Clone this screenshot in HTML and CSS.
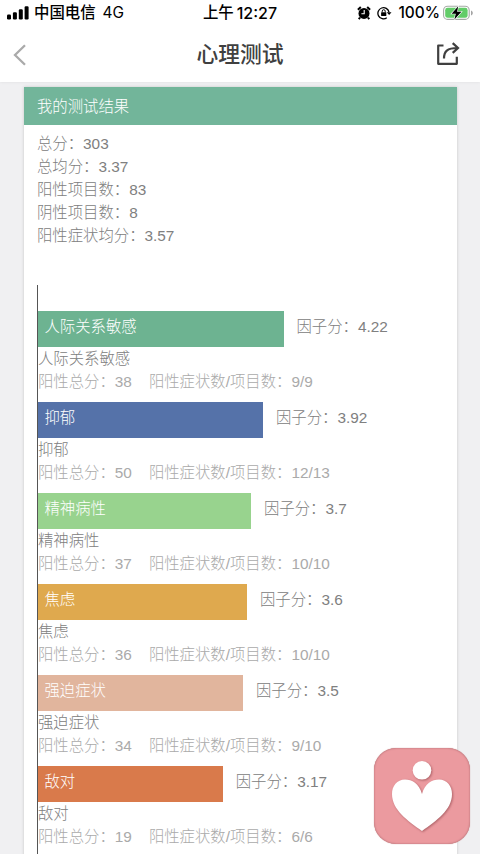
FILE: index.html
```html
<!DOCTYPE html>
<html lang="zh-CN">
<head>
<meta charset="utf-8">
<title>心理测试</title>
<link rel="stylesheet" href="styles.css">
</head>
<body>
<header class="top">
  <div class="status">
    <div class="status-left">
      <svg class="signal" width="22" height="14" viewBox="0 0 22 14"><rect x="0" y="8.6" width="4" height="4.8" rx="1.2"/><rect x="5.9" y="6.2" width="4" height="7.2" rx="1.2"/><rect x="11.8" y="3.2" width="4" height="10.2" rx="1.2"/><rect x="17.6" y="0.2" width="4" height="13.2" rx="1.2"/></svg>
      <span class="carrier">中国电信</span><span class="net">4G</span>
    </div>
    <div class="clock"><span>上午</span><span class="time">12:27</span></div>
    <div class="status-right">
      <svg class="alarm" width="14" height="14" viewBox="0 0 14 14"><circle cx="7" cy="7.4" r="5.5"/><path d="M.9 3.7 3.8 1M13.1 3.7 10.2 1M3 11.5 1.8 13.2M11 11.5l1.2 1.7" stroke="#000" stroke-width="2" fill="none"/><path d="M7.2 4v3.7H4.4" stroke="#fff" stroke-width="1.1" fill="none"/></svg>
      <svg class="lock" width="15" height="14" viewBox="0 0 15 14"><path d="M9.8 11.8A5.6 5.6 0 1 1 12 6.2" fill="none" stroke="#000" stroke-width="1.3"/><path d="M9.7 6.2h4.8L12.1 9z"/><rect x="4.1" y="6.2" width="5.2" height="3.8" rx=".5"/><path d="M5.2 6.3V5.2a1.5 1.5 0 0 1 3 0v1.1" fill="none" stroke="#000"/></svg>
      <span class="percent">100%</span>
      <svg class="battery" width="31" height="16" viewBox="0 0 31 16"><rect x=".6" y="1.2" width="25.6" height="13.2" rx="4" fill="#fff" stroke="#a5aaa5" stroke-width="1.1"/><rect x="2.2" y="2.8" width="22.4" height="10" rx="2.4" fill="#62cc68"/><path d="M28 5.5c2.4.7 2.4 4.2 0 4.9z" fill="#a5a5a5"/><path d="M15.2 1.3 8.6 8.7h4.2l-1.4 5.8 7-7.7h-4.3z" stroke="#fff" stroke-width="1.2" paint-order="stroke"/></svg>
    </div>
  </div>
  <div class="nav">
    <svg class="back" width="14" height="22" viewBox="0 0 14 22"><path d="M12 1.2 2 11l10 9.8" fill="none" stroke="#aaa" stroke-width="2.3"/></svg>
    <h1>心理测试</h1>
    <svg width="24" height="24" viewBox="0 0 24 24"><path d="M7.500 3.500H2.200v18.300h18.600v-7" fill="none" stroke="#404040" stroke-width="2.200" stroke-linejoin="round"/><path d="M8 16.500C8 9.500 11 6 21.500 6M16.700 1.100 22 6l-5.300 4.900" fill="none" stroke="#404040" stroke-width="2.200"/></svg>
  </div>
</header>
<main class="card">
  <h2>我的测试结果</h2>
  <div class="summary">
    <p>总分：303</p>
    <p>总均分：3.37</p>
    <p>阳性项目数：83</p>
    <p>阴性项目数：8</p>
    <p>阳性症状均分：3.57</p>
  </div>
  <div class="chart">
    <section class="factor">
      <div class="row"><div class="bar green" style="width:245.5px">人际关系敏感</div><span>因子分：4.22</span></div>
      <p>人际关系敏感</p>
      <p class="detail"><span>阳性总分：38</span><span>阳性症状数/项目数：9/9</span></p>
    </section>
    <section class="factor">
      <div class="row"><div class="bar blue" style="width:225px">抑郁</div><span>因子分：3.92</span></div>
      <p>抑郁</p>
      <p class="detail"><span>阳性总分：50</span><span>阳性症状数/项目数：12/13</span></p>
    </section>
    <section class="factor">
      <div class="row"><div class="bar lime" style="width:213px">精神病性</div><span>因子分：3.7</span></div>
      <p>精神病性</p>
      <p class="detail"><span>阳性总分：37</span><span>阳性症状数/项目数：10/10</span></p>
    </section>
    <section class="factor">
      <div class="row"><div class="bar amber" style="width:209px">焦虑</div><span>因子分：3.6</span></div>
      <p>焦虑</p>
      <p class="detail"><span>阳性总分：36</span><span>阳性症状数/项目数：10/10</span></p>
    </section>
    <section class="factor">
      <div class="row"><div class="bar peach" style="width:205px">强迫症状</div><span>因子分：3.5</span></div>
      <p>强迫症状</p>
      <p class="detail"><span>阳性总分：34</span><span>阳性症状数/项目数：9/10</span></p>
    </section>
    <section class="factor">
      <div class="row"><div class="bar orange" style="width:184.7px">敌对</div><span>因子分：3.17</span></div>
      <p>敌对</p>
      <p class="detail"><span>阳性总分：19</span><span>阳性症状数/项目数：6/6</span></p>
    </section>
  </div>
</main>
<div class="badge">
  <svg width="96" height="96" viewBox="0 0 96 96"><g fill="#fff"><circle cx="48" cy="22.3" r="9.3"/><path d="M48 46C45 35.500 38 31.500 31 31.500C23 31.500 18 38 18 46C18 62 34 73 48 83C62 73 78 62 78 46C78 38 73 31.500 65 31.500C58 31.500 51 35.500 48 46Z"/></g></svg>
</div>
</body>
</html>
```
FILE: styles.css
```css
* { box-sizing: border-box; }
body {
  margin: 0;
  height: 854px;
  overflow: hidden;
  background: #f0f0f2;
  color: #808080;
  font: 15.36px/23px "Liberation Sans", "Noto Sans CJK SC", sans-serif;
  font-weight: 300;
}
h1, h2, p { margin: 0; }
svg { display: block; flex: none; }
.top { height: 82px; background: #fff; box-shadow: 0 0 3px rgba(0,0,0,.08); }
.status {
  display: grid;
  grid-template-columns: 1fr auto 1fr;
  height: 26px;
  padding: 0 7px 0 7px;
  color: #000;
  font: 500 15.4px/26px Inter, "Noto Sans CJK SC", sans-serif;
}
.status-left, .status-right, .clock { display: flex; align-items: center; white-space: nowrap; }
.status-right { justify-content: flex-end; }
.carrier { margin-left: 5px; }
.net { margin-left: 7px; font-weight: 400; font-size: 15.4px; }
.time { margin-left: 3px; font-size: 16px; }
.alarm { margin-right: 6px; }
.percent { margin: 0 3px 0 6px; font-size: 15.4px; }
.battery { margin-right: -1px; }
.nav {
  display: flex;
  align-items: center;
  justify-content: space-between;
  height: 56px;
  padding: 0 20px 0 13px;
}
.back { margin-top: 2px; }
h1 { margin: -3px 0 0 17px; color: #404040; font: 500 21.8px/32px "Noto Sans CJK SC", sans-serif; }
.card {
  width: 432.5px;
  height: 780px;
  margin: 5px 0 0 24px;
  background: #fff;
  box-shadow: 0 0 3px rgba(0,0,0,.18);
}
h2 {
  height: 38px;
  padding-left: 13px;
  background: #72b59a;
  color: #fff;
  font: inherit;
  line-height: 39px;
}
.summary { padding: 7px 13px 0; }
.chart {
  height: 600px;
  margin: 38px 13px 0;
  padding-top: 26px;
  border-left: 1px solid #555;
}
.factor { height: 91px; }
.row { display: flex; gap: 13px; height: 36px; line-height: 31px; }
.bar { padding-left: 6.5px; color: #fff; }
.green { background: #6db391; }
.blue { background: #5572a9; }
.lime { background: #98d38e; }
.amber { background: #dfa94e; }
.peach { background: #e1b59d; }
.orange { background: #d97a4b; }
.detail { display: flex; gap: 17px; color: #aaa; }
.badge {
  position: absolute;
  left: 374px;
  top: 748px;
  width: 96px;
  height: 96px;
  border-radius: 22px;
  background: #eb9a9f;
  box-shadow: inset 0 0 2px #a9656b, 0 0 1px #b77;
}
.badge svg { filter: drop-shadow(1px 1px 1px rgba(125,55,60,.55)); }
```
